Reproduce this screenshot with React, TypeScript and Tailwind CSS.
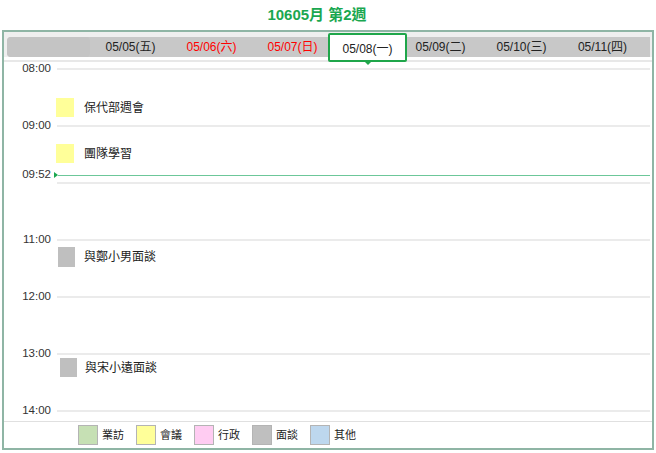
import React from "react";

const FONT = { fontFamily: '"Liberation Sans", "Noto Sans CJK TC", sans-serif' };

const days = [
  { label: "05/05(五)", red: false },
  { label: "05/06(六)", red: true },
  { label: "05/07(日)", red: true },
];
const laterDays = ["05/09(二)", "05/10(三)", "05/11(四)"];

const hours = [
  { label: "08:00", h: "h-[57px]" },
  { label: "09:00", h: "h-[57px]" },
  { label: "", h: "h-[57px]" },
  { label: "11:00", h: "h-[57px]" },
  { label: "12:00", h: "h-[57px]" },
  { label: "13:00", h: "h-[57px]" },
  { label: "14:00", h: "h-[17px]" },
];

const legend = [
  { label: "業訪", cls: "bg-[#c6e0b4]" },
  { label: "會議", cls: "bg-[#ffff99]" },
  { label: "行政", cls: "bg-[#ffccf2]" },
  { label: "面談", cls: "bg-[#bfbfbf]" },
  { label: "其他", cls: "bg-[#bdd7ee]" },
];

export default function App() {
  return (
    <div className="w-[656px] h-[453px] bg-white text-[#222]" style={FONT}>
      <div className="h-[30px] flex items-center justify-center pr-[22px] text-[15px] font-bold text-[#1aa750]">
        10605月 第2週
      </div>
      <div className="ml-[2px] w-[652px] h-[420px] border-2 border-[#8fb5a5] flex flex-col">
        {/* header */}
        <div className="h-[30px] flex flex-col">
          <div className="bg-[#efefef] pt-[5px] pl-[3px] pr-[2px]">
            <div className="h-[20px] bg-[#c8c8c8] rounded-l-[4px] flex items-center text-[12px]">
              <div className="w-[83px] h-full rounded-[4px] bg-[#c4c4c4]" />
              {days.map((d) => (
                <div
                  key={d.label}
                  className={`w-[81px] text-center ${d.red ? "text-[#ff0000]" : "text-[#222]"}`}
                >
                  {d.label}
                </div>
              ))}
              <div className="w-[67px] h-full relative">
                <div className="absolute -left-[5px] -top-[4px] w-[79px] h-[29px] bg-white border-2 border-[#1fa64a] rounded-[2px] flex items-center justify-center pt-[3px] text-[12px] text-[#222] z-10">
                  05/08(一)
                  <div className="absolute left-1/2 -bottom-[5px] -translate-x-1/2 w-0 h-0 border-l-[3px] border-r-[3px] border-t-[3px] border-l-transparent border-r-transparent border-t-[#1fa64a]" />
                </div>
              </div>
              {laterDays.map((d) => (
                <div key={d} className="w-[81px] text-center">
                  {d}
                </div>
              ))}
            </div>
          </div>
          <div className="flex-1 bg-white border-b-2 border-[#e8e8e8]" />
        </div>

        {/* grid */}
        <div className="relative h-[359px] flex flex-col">
          {hours.map((h, i) => (
            <div key={i} className={`${h.h} overflow-visible`}>
              <div className="h-[14px] flex items-center">
                <div className="w-[47px] text-right text-[11.5px] text-[#333]">{h.label}</div>
                <div className="ml-[6px] mr-[2px] flex-1 h-[2px] bg-[#ebebeb]" />
              </div>
            </div>
          ))}

          {/* now line */}
          <div className="absolute left-0 right-[2px] top-[106px] h-[14px] flex items-center">
            <div className="w-[47px] text-right text-[11.5px] text-[#333]">09:52</div>
            <div className="ml-[3px] w-0 h-0 border-t-[3px] border-b-[3px] border-l-[4px] border-t-transparent border-b-transparent border-l-[#1aa750]" />
            <div className="flex-1 h-px bg-[#6cc799]" />
          </div>

          {/* events */}
          <div className="absolute left-[52px] top-[36px] flex items-center gap-[10px]">
            <div className="w-[18px] h-[19px] bg-[#ffff99]" />
            <span className="text-[12px]">保代部週會</span>
          </div>
          <div className="absolute left-[52px] top-[82px] flex items-center gap-[10px]">
            <div className="w-[18px] h-[19px] bg-[#ffff99]" />
            <span className="text-[12px]">團隊學習</span>
          </div>
          <div className="absolute left-[54px] top-[185px] flex items-center gap-[9px]">
            <div className="w-[17px] h-[20px] bg-[#bfbfbf]" />
            <span className="text-[12px]">與鄭小男面談</span>
          </div>
          <div className="absolute left-[56px] top-[296px] flex items-center gap-[8px]">
            <div className="w-[17px] h-[19px] bg-[#bfbfbf]" />
            <span className="text-[12px]">與宋小遠面談</span>
          </div>
        </div>

        {/* legend */}
        <div className="flex-1 border-t border-[#e0e0e0] flex items-center pl-[74px] gap-[12px] text-[11px]">
          {legend.map((l) => (
            <div key={l.label} className="flex items-center gap-[4px]">
              <div className={`w-[20px] h-[20px] border border-[#b4b4b4] ${l.cls}`} />
              <span>{l.label}</span>
            </div>
          ))}
        </div>
      </div>
    </div>
  );
}
